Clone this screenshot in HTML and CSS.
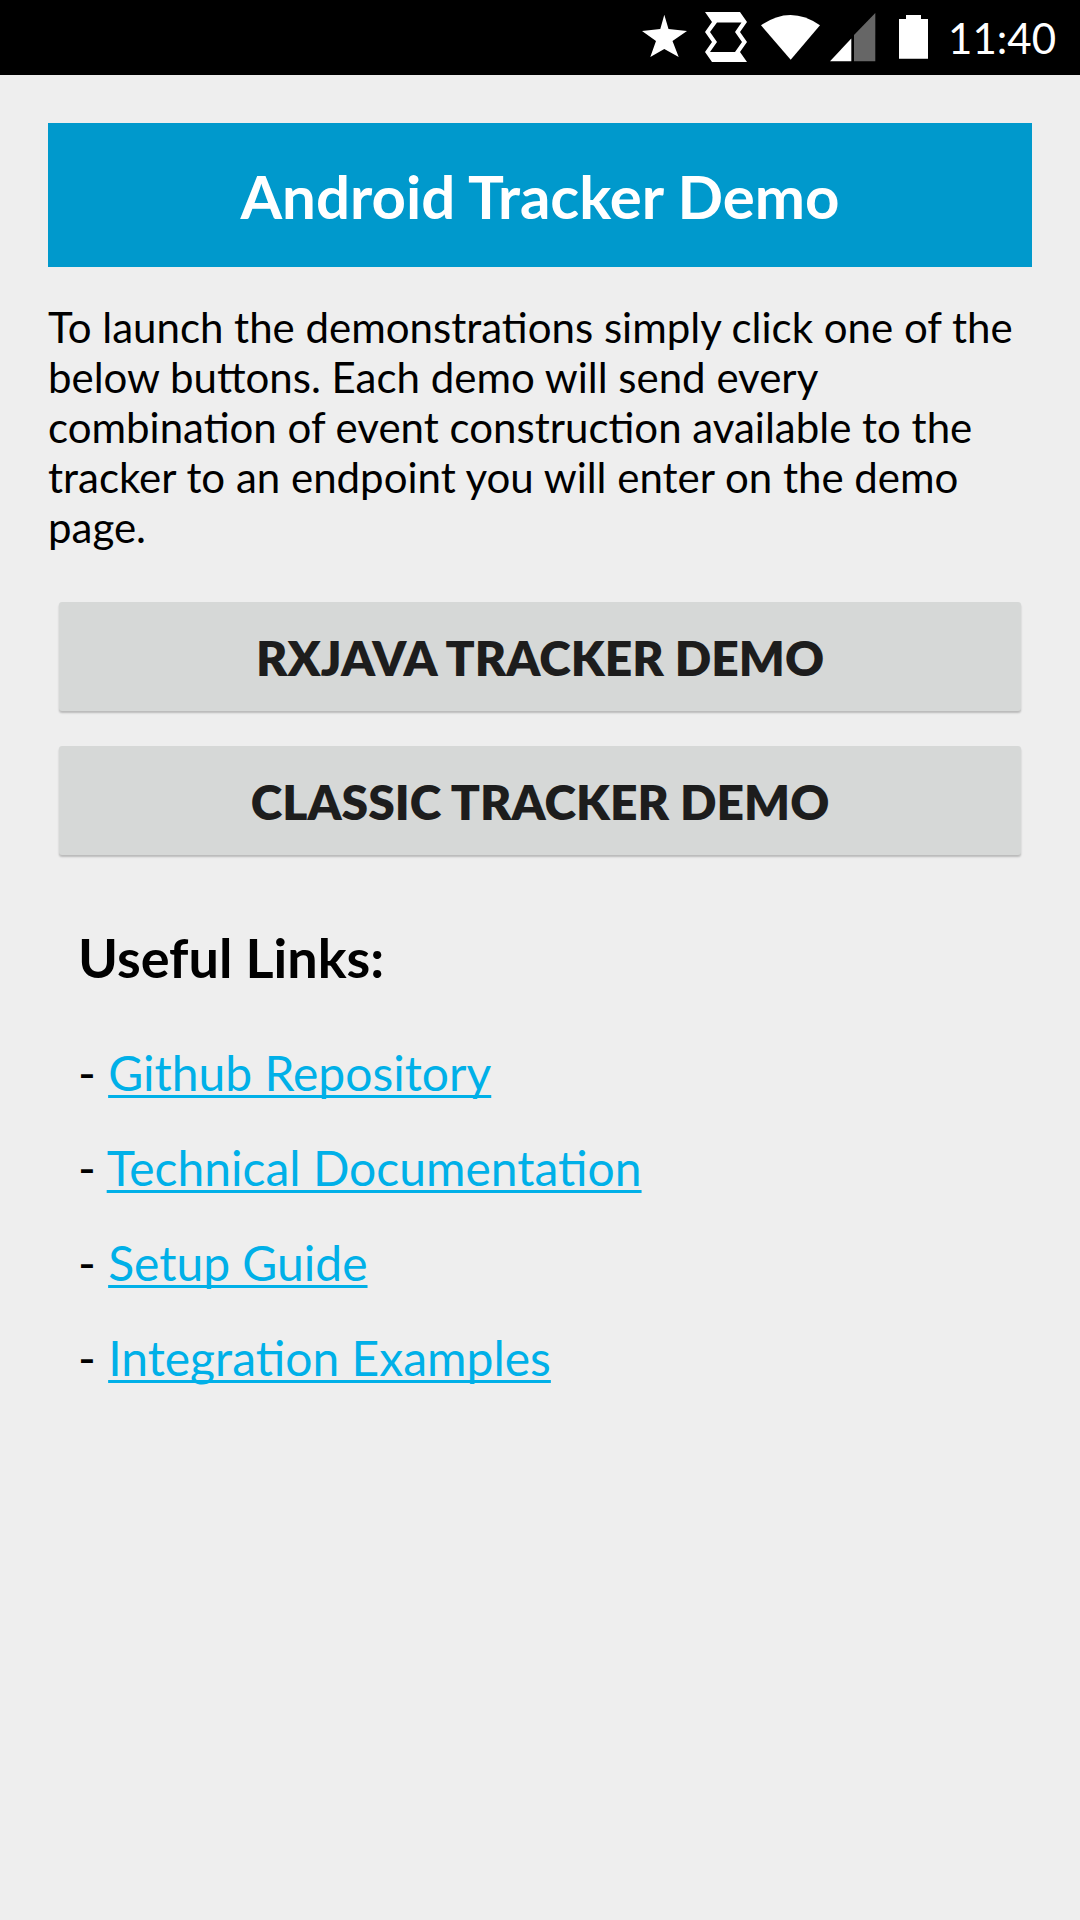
FILE: index.html
```html
<!DOCTYPE html>
<html lang="en">
<head>
<meta charset="utf-8">
<meta name="viewport" content="width=device-width, initial-scale=1">
<title>Android Tracker Demo</title>
<link rel="stylesheet" href="styles.css">
</head>
<body>
<header class="status-bar">
  <svg class="status-icons" viewBox="0 0 290 75" aria-hidden="true">
    <path fill="#fff" d="M24.3 14.7L28.5 29 47 31 32.5 41 38.7 57 24.3 49 10.3 57 16 41 2 31 20.3 29z"/>
    <path fill="#fff" fill-rule="evenodd" d="M65 12h35l7 10-7 10 7 10-7 10 7 10H72l-7-10 7-10-7-10 7-10zM77 22.5h24.5L95 32l7 10-7 10H70l7-10-7-10z"/>
    <path fill="#fff" d="M121 25.3Q150.5 4.7 180 25.3L150.7 59.7z"/>
    <path fill="#fff" d="M190 61.3L211.3 38.5V61.3z"/>
    <path fill="#666" d="M214 35L235.3 13V61.3H214z"/>
    <path fill="#fff" d="M259 19h7v-4h15v4h7v39.7h-29z"/>
  </svg>
  <time class="clock">11:40</time>
</header>
<main class="content">
  <h1 class="title">Android Tracker Demo</h1>
  <p class="intro">To launch the demonstrations simply click one of the below buttons. Each demo will send every combination of event construction available to the tracker to an endpoint you will enter on the demo page.</p>
  <div class="actions">
    <button class="action" type="button">RXJAVA TRACKER DEMO</button>
    <button class="action" type="button">CLASSIC TRACKER DEMO</button>
  </div>
  <section class="links">
    <h2 class="links-title">Useful Links:</h2>
    <ul class="link-list">
      <li>- <a href="#github">Github Repository</a></li>
      <li>- <a href="#docs">Technical Documentation</a></li>
      <li>- <a href="#setup">Setup Guide</a></li>
      <li>- <a href="#examples">Integration Examples</a></li>
    </ul>
  </section>
</main>
</body>
</html>
```

FILE: styles.css
```css
* { box-sizing: border-box; }
body {
  margin: 0;
  min-height: 100vh;
  background: #eee;
  color: #000;
  font-family: Lato, sans-serif;
}
.status-bar {
  display: flex;
  align-items: center;
  justify-content: flex-end;
  gap: 18px;
  height: 75px;
  padding-right: 24px;
  background: #000;
}
.status-icons { width: 290px; height: 75px; }
.clock { color: #fff; font-size: 42px; line-height: 50px; }
.content { padding: 48px; }
.title {
  margin: 0 0 35px;
  padding: 37px 0 35px;
  background: #0099cc;
  color: #fff;
  font-size: 60px;
  line-height: 72px;
  font-weight: 700;
  text-align: center;
}
.intro { margin: 0; font-size: 42px; line-height: 50px; }
.actions {
  display: grid;
  gap: 35px;
  margin: 50px 11px 0;
}
.action {
  height: 109px;
  padding: 3px 0 0;
  border: 0;
  border-radius: 3px;
  background: #d6d8d7;
  color: #1d1d1d;
  font: 800 48px/58px Lato, sans-serif;
  box-shadow: 0 2px 2px rgba(0, 0, 0, 0.22);
}
.links { margin: 70px 30px 0; }
.links-title { margin: 0; font-size: 54px; line-height: 65px; }
.link-list {
  display: grid;
  gap: 35px;
  margin: 53px 0 0;
  padding: 0;
  list-style: none;
  font-size: 48px;
  line-height: 60px;
}
.link-list a {
  color: #00b0e8;
  text-decoration-thickness: 3px;
  text-decoration-skip-ink: none;
  text-underline-offset: 4px;
}
```
